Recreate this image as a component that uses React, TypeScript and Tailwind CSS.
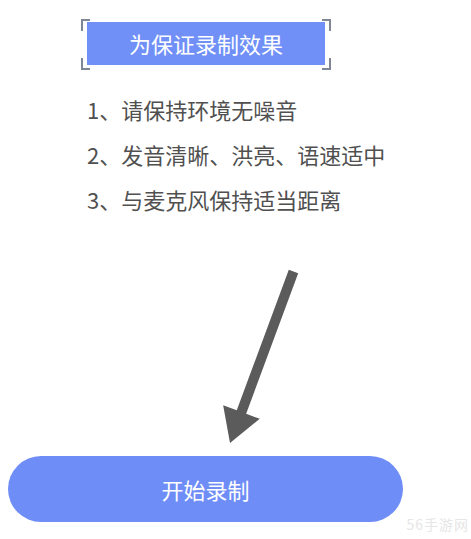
import React from "react";

const tips = [
  "1、请保持环境无噪音",
  "2、发音清晰、洪亮、语速适中",
  "3、与麦克风保持适当距离",
];

const font = { fontFamily: '"Noto Sans CJK SC", "Noto Sans", sans-serif' };

function Corner({ className }: { className: string }) {
  return <span className={`absolute h-[12px] w-[9px] border-[#7f8797] ${className}`} />;
}

export default function App() {
  return (
    <div className="relative h-[539px] w-[471px] overflow-hidden bg-white" style={font}>
      {/* title with bracket frame */}
      <div className="pt-[19px]">
        <div className="relative ml-[81px] h-[51px] w-[250px] px-[6px] pt-[3px]">
          <Corner className="left-0 top-0 border-l-2 border-t-2" />
          <Corner className="right-0 top-0 border-r-2 border-t-2" />
          <Corner className="bottom-0 left-0 border-b-2 border-l-2" />
          <Corner className="bottom-0 right-0 border-b-2 border-r-2" />
          <div className="relative flex h-[43px] items-center justify-center bg-[#7090f7] text-[22px] text-white">
            为保证录制效果
          </div>
        </div>
      </div>

      {/* tips */}
      <div className="pl-[87px] pt-[17px] text-[22px] leading-[45px] text-[#505050]">
        {tips.map((t) => (
          <p key={t}>{t}</p>
        ))}
      </div>

      {/* arrow */}
      <svg viewBox="0 0 471 234" className="block h-[234px] w-[471px]">
        <polygon
          fill="#5b5b5b"
          points="288.8,47.8 298.2,51.2 246.15,191.75 259.75,196.8 230,221 223.15,183.3 236.75,188.35"
        />
      </svg>

      {/* button */}
      <button className="ml-[8px] flex h-[66px] w-[395px] items-center justify-center rounded-full bg-[#6e8df7] text-[22px] text-white">
        开始录制
      </button>

      <span className="absolute right-[2px] top-[514px] text-[14px] tracking-[1px] text-[#e6e6e6]">56手游网</span>
    </div>
  );
}
